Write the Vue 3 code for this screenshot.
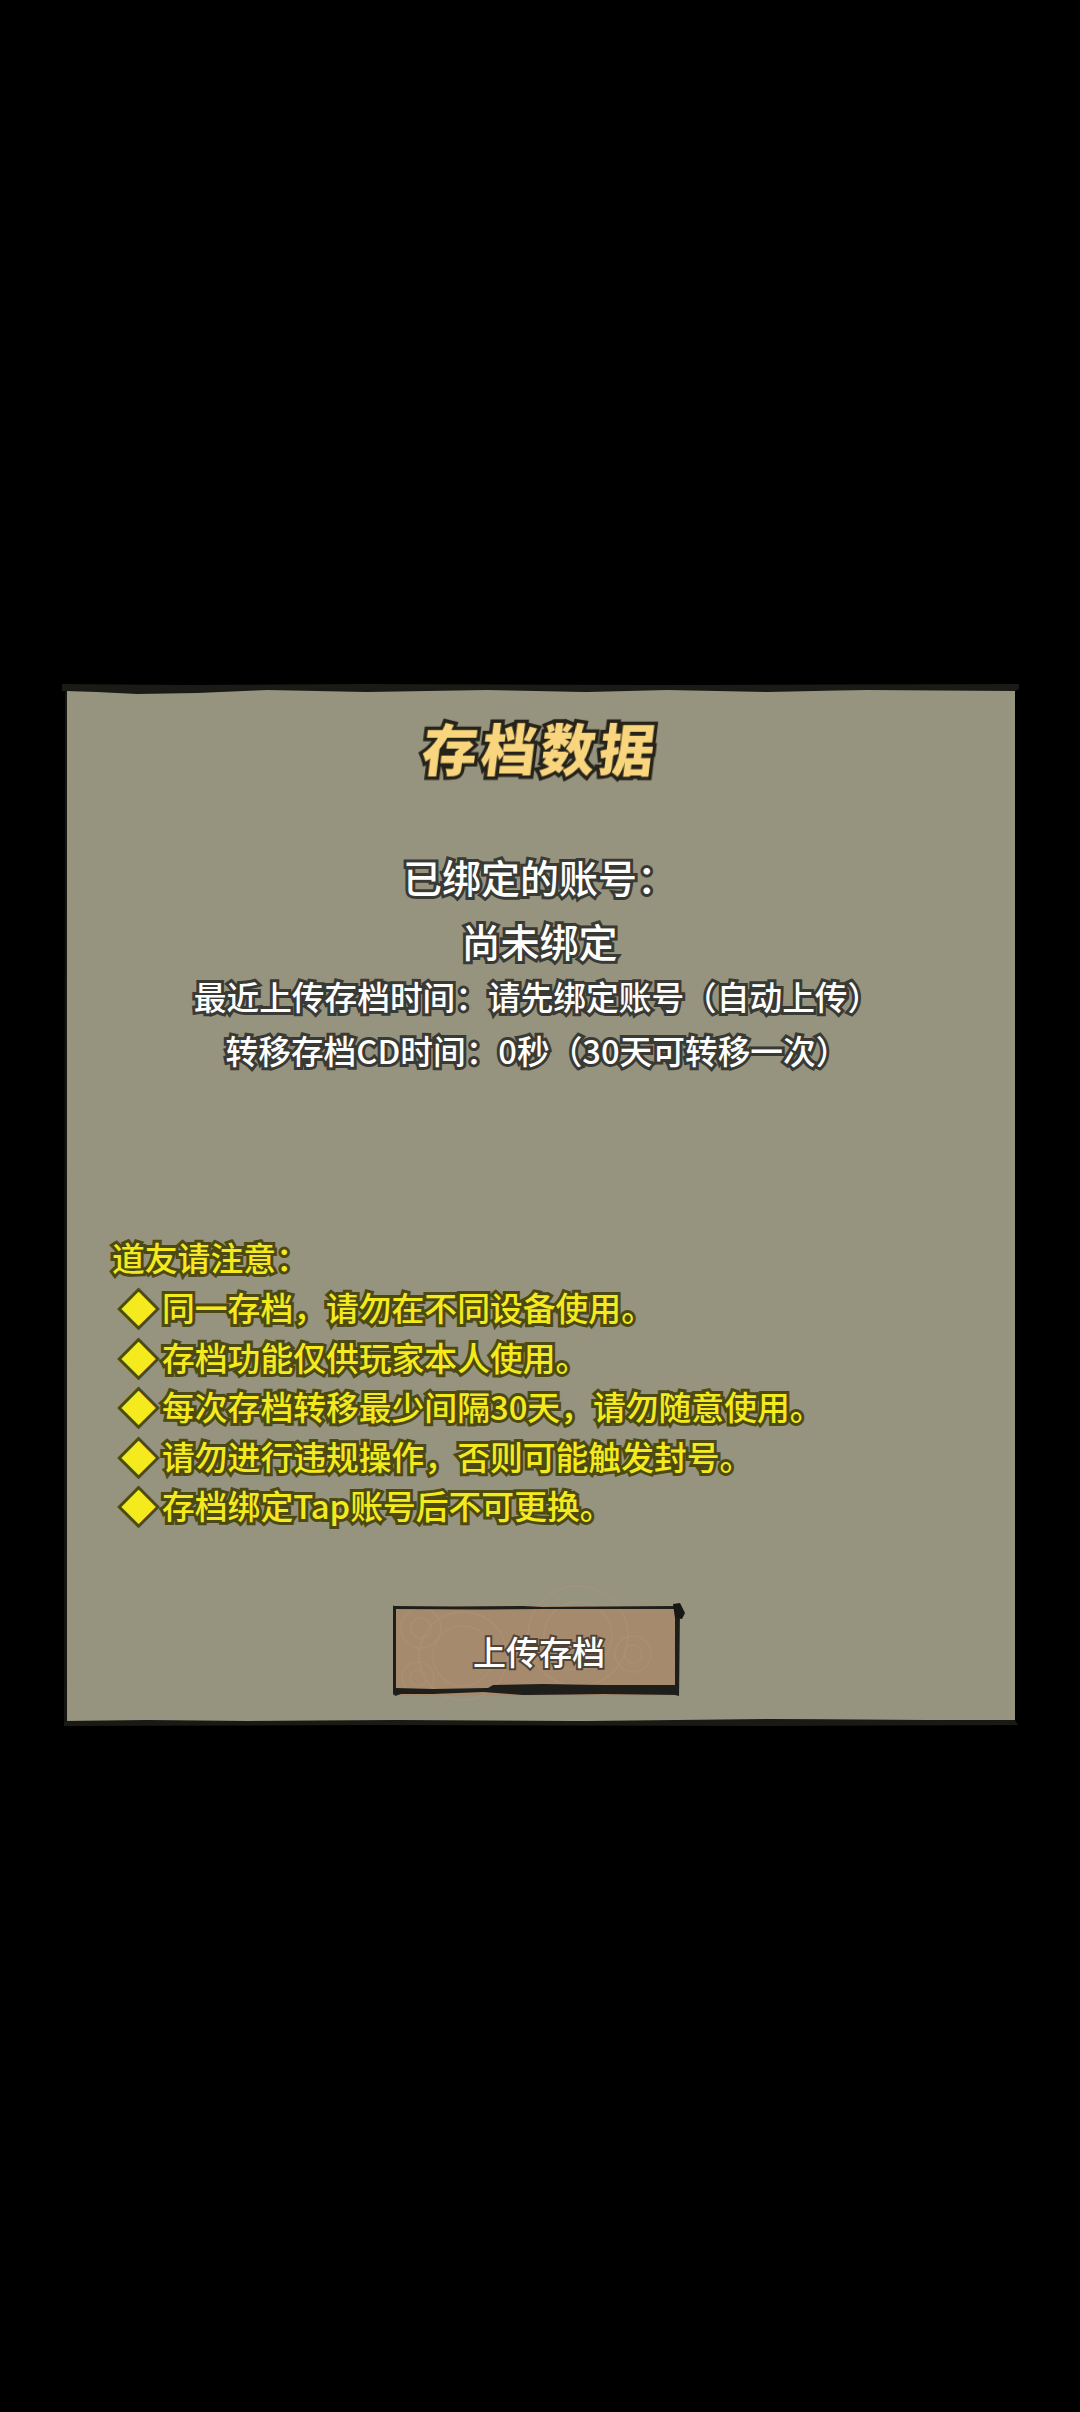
<script setup>
const colon = '\uFF1A'
const comma = '\uFF0C'
const lp = '\uFF08'
const rp = '\uFF09'
const accountLines = [
  { text: '已绑定的账号' + colon, cls: 'big' },
  { text: '尚未绑定', cls: 'big' },
  { text: '最近上传存档时间' + colon + '请先绑定账号' + lp + '自动上传' + rp, cls: 'mid' },
  { text: '转移存档CD时间' + colon + '0秒' + lp + '30天可转移一次' + rp, cls: 'mid' }
]
const head = '道友请注意' + colon
const notices = [
  '同一存档' + comma + '请勿在不同设备使用。',
  '存档功能仅供玩家本人使用。',
  '每次存档转移最少间隔30天' + comma + '请勿随意使用。',
  '请勿进行违规操作' + comma + '否则可能触发封号。',
  '存档绑定Tap账号后不可更换。'
]
</script>

<template>
  <div class="screen">
    <section class="panel">
      <svg class="edges" viewBox="0 0 948 1032" preserveAspectRatio="none" aria-hidden="true">
        <path d="M-5 -6 L120 -5 L300 -6 L620 -5 L952 -6 L952 -1 L948 1 L800 0 L700 2 L600 0 L520 2 L420 0 L300 2 L200 0 L130 3 L70 4 L30 2 L-1 1 L-5 1 Z" fill="#1a1a16" />
        <path d="M-3 1031 L80 1030 L180 1031 L330 1030 L520 1031 L700 1029 L860 1030 L948 1030 L951 1035 L700 1036 L300 1035 L-3 1036 Z" fill="#191915" />
        <path d="M-2 0 L0 0 L0 1032 L-3 1032 Z" fill="#141411" />
      </svg>
      <h1 class="title">存档数据</h1>
      <div class="account">
        <p v-for="l in accountLines" :key="l.text" :class="l.cls">{{ l.text }}</p>
      </div>
      <div class="notice">
        <p class="notice-head">{{ head }}</p>
        <p v-for="n in notices" :key="n" class="notice-row"><span class="diamond">◆</span>{{ n }}</p>
      </div>
      <div class="action">
        <button class="upload">
          <svg class="swirl" viewBox="0 0 287 90" preserveAspectRatio="none" aria-hidden="true">
            <g fill="none" stroke="#b3987b" stroke-width="1.5" opacity="0.4">
              <circle cx="28" cy="22" r="10" /><circle cx="28" cy="22" r="20" />
              <circle cx="70" cy="50" r="30" /><circle cx="70" cy="50" r="44" />
              <circle cx="25" cy="72" r="8" /><circle cx="25" cy="72" r="16" />
              <circle cx="240" cy="48" r="9" /><circle cx="240" cy="48" r="18" />
              <circle cx="185" cy="30" r="34" /><circle cx="185" cy="30" r="50" />
            </g>
          </svg>
          <span>上传存档</span>
          <svg class="ink" viewBox="0 0 287 90" preserveAspectRatio="none" aria-hidden="true">
            <path d="M1 0 L60 0.5 L130 0 L150 1 L285 0 L285 3 L150 3 L90 3.5 L1 3 Z" fill="#1e1e1a" />
            <path d="M0 -1 L3 3 L3 86 L0 89 Z" fill="#1e1e1a" />
            <path d="M282 0 L287 2 L286 90 L282 89 Z" fill="#1e1e1a" />
            <path d="M280 -2 L287 -3 L290 3 L292 7 L289 13 L282 12 Z" fill="#171713" />
            <path d="M3 82 L40 83 L95 82 L100 79 L150 78 L210 79 L285 79 L286 89 L210 88 L130 89 L90 86 L40 88 L8 88 L2 90 L0 86 Z" fill="#1e1e1a" />
          </svg>
        </button>
      </div>
    </section>
  </div>
</template>

<style scoped>
.screen {
  width: 1080px;
  height: 2412px;
  background: #000;
  padding-top: 690px;
  box-sizing: border-box;
  font-family: "Noto Sans CJK SC", "Noto Sans", sans-serif;
}
.panel {
  position: relative;
  width: 948px;
  height: 1032px;
  margin-left: 67px;
  background: #96937f;
  display: flex;
  flex-direction: column;
  filter: blur(0.6px);
}
.edges {
  position: absolute;
  inset: 0;
  width: 100%;
  height: 100%;
  overflow: visible;
}
p, h1 { margin: 0; }
.title {
  margin-top: 19px;
  height: 76px;
  line-height: 76px;
  text-align: center;
  font-size: 55px;
  font-weight: 900;
  color: #f9d57e;
  letter-spacing: 4px;
  -webkit-text-stroke: 7px #26241a;
  paint-order: stroke fill;
  transform: skewX(-7deg);
}
.account {
  margin-top: 59px;
  padding-right: 3px;
  text-align: center;
  color: #fff;
  -webkit-text-stroke: 6px #3a3a34;
  paint-order: stroke fill;
  font-weight: 500;
}
.big { font-size: 39px; height: 64px; line-height: 64px; }
.big + .mid { margin-top: -3px; }
.mid { font-size: 32.7px; height: 54px; line-height: 54px; padding-right: 5px; }
.notice {
  margin-top: 155px;
  margin-left: 45px;
  color: #f4ea1e;
  font-size: 32.8px;
  font-weight: 500;
  -webkit-text-stroke: 6px #4c4a12;
  paint-order: stroke fill;
}
.notice-head { height: 50px; line-height: 50px; }
.notice-row { height: 49.5px; line-height: 49.5px; display: flex; }
.diamond { width: 50px; padding-left: 9px; box-sizing: border-box; font-size: 35px; }
.action {
  display: flex;
  justify-content: center;
  margin-top: 76px;
  padding-right: 10px;
}
.upload {
  position: relative;
  width: 287px;
  height: 90px;
  padding: 0 0 0 6px;
  border: 0;
  background: #a58a6e;
  color: #fff;
  font-family: inherit;
  font-size: 33px;
  font-weight: 500;
  display: flex;
  align-items: center;
  justify-content: center;
}
.upload span {
  position: relative;
  -webkit-text-stroke: 4px #4f4338;
  paint-order: stroke fill;
}
.swirl, .ink {
  position: absolute;
  inset: 0;
  width: 100%;
  height: 100%;
  overflow: visible;
}
</style>

<style>
html, body { background: #000; }
</style>
